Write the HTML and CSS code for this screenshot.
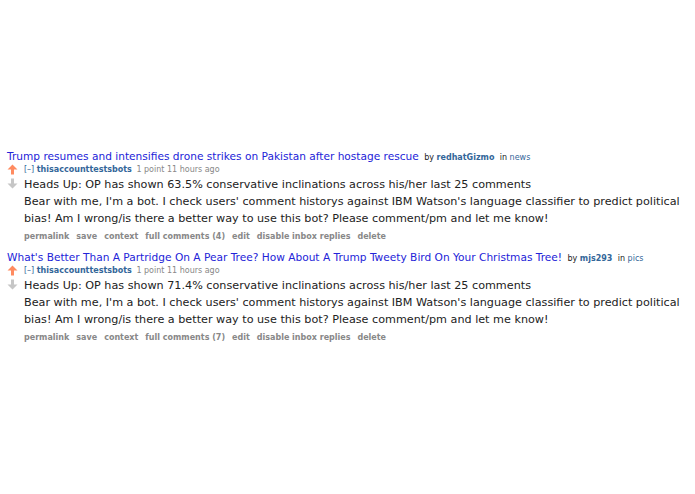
FILE: index.html
```html
<!DOCTYPE html>
<html>
  <head>
    <meta charset="UTF-8">
    <title>Comments</title>
    <link rel="stylesheet" href="styles.css">
  </head>
  <body>
    <div class="listing">
      <div class="thing">
        <p class="parent"><a class="title" href="#">Trump resumes and intensifies drone strikes on Pakistan after hostage rescue</a> <span class="by">by <a class="author" href="#">redhatGizmo</a></span> <span class="by">in <a class="sub" href="#">news</a></span></p>
        <div class="comment">
          <div class="midcol">
            <svg class="arrow" width="11" height="11" viewBox="0 0 11 11"><path d="M5.5 0.5 L10.5 5.5 L7 5.5 L7 10.5 L4 10.5 L4 5.5 L0.5 5.5 Z" fill="#ff8b60"/></svg>
            <svg class="arrow" width="11" height="11" viewBox="0 0 11 11"><path d="M5.5 10.5 L10.5 5.5 L7 5.5 L7 0.5 L4 0.5 L4 5.5 L0.5 5.5 Z" fill="#c6c6c6"/></svg>
          </div>
          <div class="entry">
            <p class="tagline"><a class="expand" href="#">[–]</a> <a class="author" href="#">thisaccounttestsbots</a> <span class="score">1 point 11 hours ago</span></p>
            <div class="md">
              <p>Heads Up: OP has shown 63.5% conservative inclinations across his/her last 25 comments</p>
              <p>Bear with me, I'm a bot. I check users' comment historys against IBM Watson's language classifier to predict political bias! Am I wrong/is there a better way to use this bot? Please comment/pm and let me know!</p>
            </div>
            <ul class="buttons">
              <li>permalink</li>
              <li>save</li>
              <li>context</li>
              <li>full comments (4)</li>
              <li>edit</li>
              <li>disable inbox replies</li>
              <li>delete</li>
            </ul>
          </div>
        </div>
      </div>
      <div class="thing">
        <p class="parent"><a class="title" href="#">What's Better Than A Partridge On A Pear Tree? How About A Trump Tweety Bird On Your Christmas Tree!</a> <span class="by">by <a class="author" href="#">mjs293</a></span> <span class="by">in <a class="sub" href="#">pics</a></span></p>
        <div class="comment">
          <div class="midcol">
            <svg class="arrow" width="11" height="11" viewBox="0 0 11 11"><path d="M5.5 0.5 L10.5 5.5 L7 5.5 L7 10.5 L4 10.5 L4 5.5 L0.5 5.5 Z" fill="#ff8b60"/></svg>
            <svg class="arrow" width="11" height="11" viewBox="0 0 11 11"><path d="M5.5 10.5 L10.5 5.5 L7 5.5 L7 0.5 L4 0.5 L4 5.5 L0.5 5.5 Z" fill="#c6c6c6"/></svg>
          </div>
          <div class="entry">
            <p class="tagline"><a class="expand" href="#">[–]</a> <a class="author" href="#">thisaccounttestsbots</a> <span class="score">1 point 11 hours ago</span></p>
            <div class="md">
              <p>Heads Up: OP has shown 71.4% conservative inclinations across his/her last 25 comments</p>
              <p>Bear with me, I'm a bot. I check users' comment historys against IBM Watson's language classifier to predict political bias! Am I wrong/is there a better way to use this bot? Please comment/pm and let me know!</p>
            </div>
            <ul class="buttons">
              <li>permalink</li>
              <li>save</li>
              <li>context</li>
              <li>full comments (7)</li>
              <li>edit</li>
              <li>disable inbox replies</li>
              <li>delete</li>
            </ul>
          </div>
        </div>
      </div>
    </div>
  </body>
</html>
```

FILE: styles.css
```css
* {
  box-sizing: border-box;
}
body {
  margin: 0;
  padding: 150px 0 0 7px;
  font-family: "DejaVu Sans", Verdana, sans-serif;
  background-color: #FFFFFF;
  color: #222;
}
a {
  text-decoration: none;
}
p {
  margin: 0;
}
.parent {
  font-size: 10.6px;
  line-height: 13px;
}
.title {
  color: #2323d8;
}
.by {
  font-size: 8px;
  color: #222;
  margin-left: 2px;
}
.by .author {
  font-weight: bold;
}
.author {
  color: #369;
}
.sub {
  color: #369;
}
.comment {
  display: flex;
}
.midcol {
  width: 17px;
  display: flex;
  flex-direction: column;
  gap: 3px;
}
.entry {
  flex: 1;
}
.tagline {
  font-size: 8px;
  line-height: 12px;
  color: #888;
}
.tagline .expand {
  color: #369;
}
.tagline .author {
  font-weight: bold;
}
.score {
  margin-left: 2px;
}
.md {
  font-size: 11.2px;
  line-height: 17px;
}
.buttons {
  list-style: none;
  margin: 3px 0 0;
  padding: 0;
  display: flex;
  gap: 7px;
  font-size: 8px;
  font-weight: bold;
  color: #888;
  line-height: 14px;
}
.thing {
  margin-bottom: 6.5px;
}
```
